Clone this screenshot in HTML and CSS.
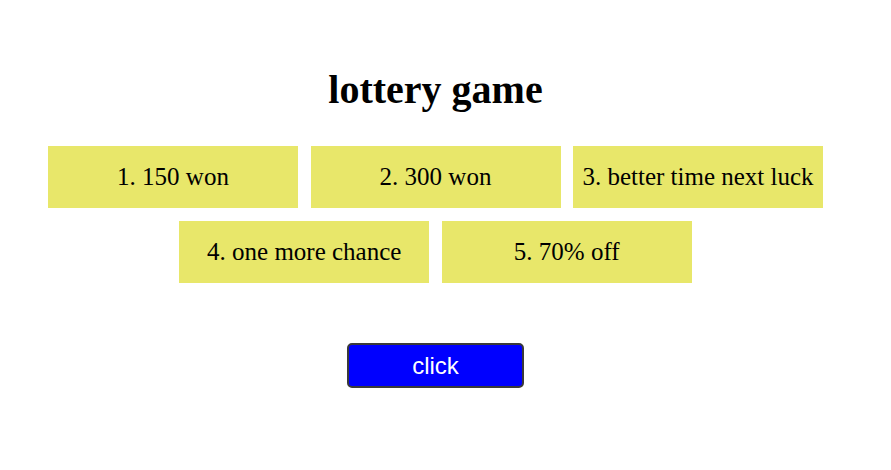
FILE: index.html
```html
<!DOCTYPE html>
<html>
<head>
<meta charset="utf-8">
<link rel="stylesheet" href="styles.css">
</head>
<body>
<div class="page">
  <h1 class="title">lottery game</h1>
  <div class="grid">
    <div class="cell">1. 150 won</div>
    <div class="cell">2. 300 won</div>
    <div class="cell">3. better time next luck</div>
    <div class="cell">4. one more chance</div>
    <div class="cell">5. 70% off</div>
  </div>
  <button class="btn">click</button>
</div>
</body>
</html>
```
FILE: styles.css
```css
html, body {
  margin: 0;
  padding: 0;
  background: #ffffff;
}
.page {
  width: 871px;
  display: flex;
  flex-direction: column;
  align-items: center;
  font-family: "Liberation Serif", "Times New Roman", serif;
  color: #000;
}
.title {
  margin: 66px 0 0 0;
  font-size: 40px;
  line-height: 48px;
  font-weight: bold;
}
.grid {
  margin-top: 32px;
  width: 790px;
  display: flex;
  flex-wrap: wrap;
  justify-content: center;
  column-gap: 12.5px;
  row-gap: 13px;
}
.cell {
  width: 250px;
  height: 62px;
  background: #e8e76a;
  display: flex;
  align-items: center;
  justify-content: center;
  font-size: 25px;
}
.btn {
  margin-top: 60px;
  width: 177px;
  height: 45px;
  background: #0000ff;
  color: #ffffff;
  border: 2px solid #3a3a3a;
  border-radius: 5px;
  font-family: "Liberation Sans", Arial, sans-serif;
  font-size: 24px;
  padding: 0;
}
```
